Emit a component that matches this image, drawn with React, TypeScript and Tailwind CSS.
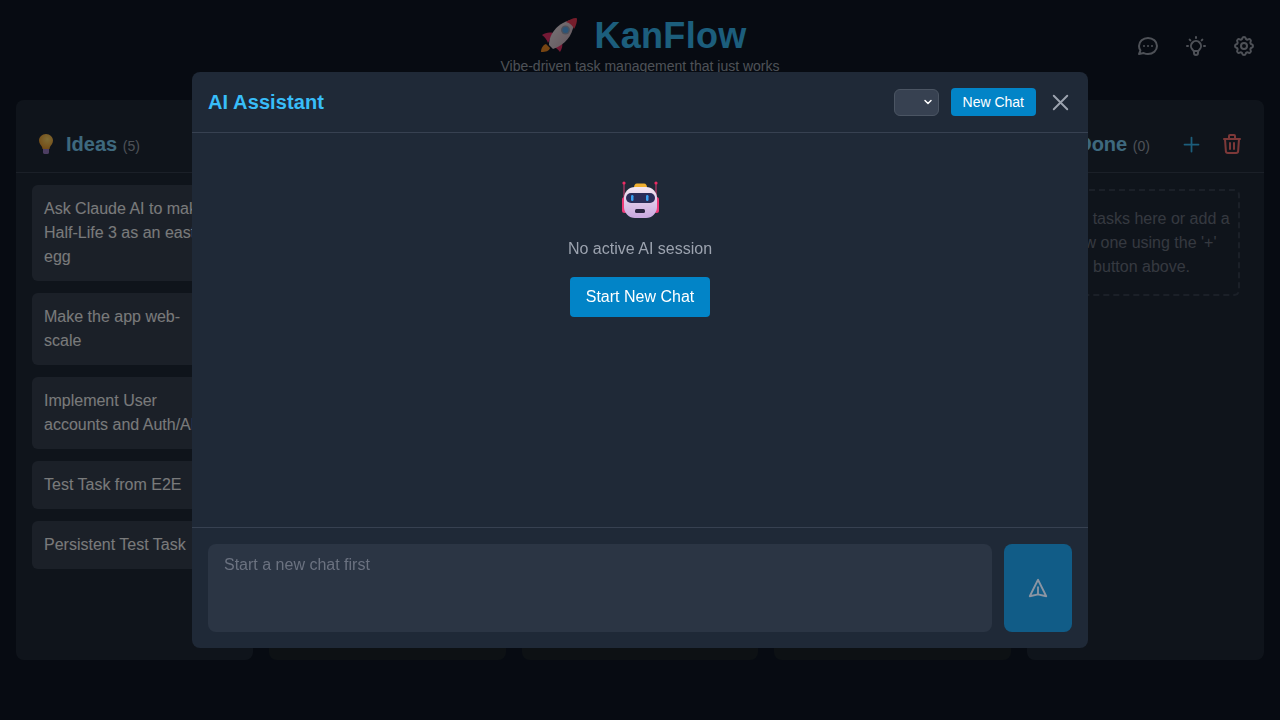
import { HiOutlineChat, HiOutlineCog, HiOutlineLightBulb, HiOutlineTrash, HiOutlinePlus, HiOutlineX, HiOutlinePaperAirplane } from "react-icons/hi";
import { ChevronDown } from "lucide-react";

const Rocket = () => (
  <svg viewBox="0 0 40 40" className="w-10 h-10">
    <defs>
      <linearGradient id="rb" x1="0" y1="0" x2="1" y2="1">
        <stop offset="0" stopColor="#f2eef0" />
        <stop offset="1" stopColor="#c4a8b8" />
      </linearGradient>
    </defs>
    <path d="M2 36c0-4 2-7 5-8l4 4c-1 3-4 4-9 4z" fill="#f08a24" />
    <path d="M3 19c3-2 7-3 11-2l-5 10c-1-3-3-6-6-8z" fill="#e8336a" />
    <path d="M21 36c2-3 3-7 2-11l-10 5c3 1 6 3 8 6z" fill="#e8336a" />
    <path d="M10 29c0-9 6-21 22-25l3 4c-2 12-9 21-21 25z" fill="url(#rb)" />
    <path d="M27 6c3-2 7-4 10-4 1 0 1 1 1 1 0 3-1 7-3 10-1-3-4-6-8-7z" fill="#ec3a56" />
    <circle cx="26.500" cy="14" r="4.500" fill="#9aa3b8" />
    <circle cx="26.500" cy="14" r="3" fill="#58a8ee" />
  </svg>
);

const Bulb = () => (
  <svg viewBox="0 0 20 24" className="w-5 h-6">
    <defs>
      <radialGradient id="bb" cx="0.6" cy="0.35" r="0.7">
        <stop offset="0" stopColor="#ffd86a" />
        <stop offset="1" stopColor="#e8962a" />
      </radialGradient>
    </defs>
    <path d="M10 2c4 0 7 3 7 6.500 0 3-2 4.500-3 6.500-.3.7-.5 1.500-.5 2h-7c0-.5-.2-1.300-.5-2-1-2-3-3.500-3-6.500C3 5 6 2 10 2z" fill="url(#bb)" />
    <path d="M7 17h6v3.500c0 1-1 1.500-3 1.500s-3-.5-3-1.500z" fill="#9a7cc4" />
  </svg>
);

const Robot = () => (
  <svg viewBox="0 0 40 40" className="w-10 h-10">
    <defs>
      <linearGradient id="hd" x1="0" y1="0" x2="0" y2="1">
        <stop offset="0" stopColor="#f4e6f0" />
        <stop offset="1" stopColor="#c9a8e0" />
      </linearGradient>
    </defs>
    <path d="M4 3l0 15M36 3l0 15" stroke="#d83a70" strokeWidth="1" />
    <circle cx="4" cy="3" r="1.600" fill="#ee2a62" />
    <circle cx="36" cy="3" r="1.600" fill="#ee2a62" />
    <rect x="2" y="17" width="5" height="16" rx="2.500" fill="#ee3a78" />
    <rect x="34" y="17" width="5" height="16" rx="2.500" fill="#ee3a78" />
    <path d="M14 8c0-3 1-4.500 3-4.500h7c2 0 3 1.500 3 4.500z" fill="#f0b030" />
    <rect x="4" y="7" width="33" height="31" rx="11" fill="url(#hd)" />
    <rect x="6" y="13" width="29" height="10" rx="5" fill="#2b2d58" />
    <rect x="11" y="15" width="2.500" height="6" rx="1.200" fill="#3aa0f0" />
    <rect x="26" y="15" width="2.500" height="6" rx="1.200" fill="#3aa0f0" />
    <rect x="15" y="29" width="10" height="4" rx="1.500" fill="#2a2440" />
  </svg>
);

const ideas = [
  "Ask Claude AI to make Half-Life 3 as an easter egg",
  "Make the app web-scale",
  "Implement User accounts and Auth/API",
  "Test Task from E2E",
  "Persistent Test Task",
];

function Column({ name, count, icon, cards, empty, add, dim }: { name: string; count: number; icon?: React.ReactNode; cards?: string[]; empty?: boolean; add?: boolean; dim?: boolean }) {
  return (
    <section className={dim ? "flex-1 min-w-0 flex flex-col bg-[#1a2329] rounded-lg" : "flex-1 min-w-0 flex flex-col bg-[#1f2937] rounded-lg"}>
      <header className="h-[73px] shrink-0 flex items-center justify-between pl-5 pr-5 pt-4 border-b border-[#374151]">
        <div className="flex items-center gap-2.5">
          <span className="w-5 flex justify-center">{icon}</span>
          <h2 className="text-xl font-bold text-[#7dd3fc] whitespace-nowrap">
            {name} <span className="text-sm font-normal text-[#9ca3af]">({count})</span>
          </h2>
        </div>
        <div className="flex items-center gap-4">
          {add && (
            <span className="w-6 h-6 flex items-center justify-center">
              <HiOutlinePlus className="w-[21px] h-[21px] text-[#38bdf8]" />
            </span>
          )}
          <HiOutlineTrash className="w-6 h-6 text-[#f87171]" />
        </div>
      </header>
      <div className="flex flex-col gap-3 pt-3 pl-4 pr-6">
        {cards?.map((c) => (
          <div key={c} className="rounded-md bg-[#374151] p-3 text-base leading-6 text-[#f3f4f6]">{c}</div>
        ))}
        {empty && (
          <div className="mt-1 rounded-md border-2 border-dashed border-[#374151] px-2 pt-4 pb-[15px] text-center text-base leading-6 text-[#6b7280]">
            Drop tasks here or add a new one using the '+' button above.
          </div>
        )}
      </div>
    </section>
  );
}

export default function App() {
  return (
    <div className="relative h-[720px] w-[1280px] overflow-hidden bg-[#0f1724] font-['Liberation_Sans',Arial,sans-serif]">
      <header className="relative h-[100px] flex flex-col items-center pt-4">
        <div className="flex items-center gap-[15px] h-10 pl-[6px]">
          <Rocket />
          <h1 className="text-4xl font-bold text-[#38bdf8] tracking-[0.3px]">KanFlow</h1>
        </div>
        <p className="text-sm text-[#9ca3af]">Vibe-driven task management that just works</p>
        <div className="absolute right-6 top-[34px] flex items-center gap-6 text-[#9ca3af]">
          <HiOutlineChat className="w-6 h-6" />
          <HiOutlineLightBulb className="w-6 h-6" />
          <HiOutlineCog className="w-6 h-6" />
        </div>
      </header>
      <main className="flex gap-4 px-4 h-[560px]">
        <Column name="Ideas" count={5} icon={<Bulb />} cards={ideas} />
        <Column name="To Do" count={0} empty dim add />
        <Column name="In Progress" count={0} empty dim add />
        <Column name="Review" count={0} empty dim add />
        <Column name="Done" count={0} empty add />
      </main>

      <div className="fixed inset-0 z-50 bg-black/50 flex items-center justify-center">
        <div className="w-[896px] h-[576px] flex flex-col bg-[#1f2937] rounded-lg">
          <div className="h-[61px] shrink-0 flex items-center justify-between px-4 border-b border-[#374151]">
            <h2 className="text-xl font-bold text-[#38bdf8] tracking-[0.1px]">AI Assistant</h2>
            <div className="flex items-center gap-3">
              <div className="w-[45px] h-[27px] flex items-center justify-end pr-[4px] rounded-md bg-[#374151] border border-[#4b5563] text-white">
                <ChevronDown className="w-3 h-3" strokeWidth={3} />
              </div>
              <button className="h-7 px-3 rounded bg-[#0284c7] text-sm text-white">New Chat</button>
              <span className="w-6 h-6 flex items-center justify-center">
                <HiOutlineX className="w-[27px] h-[27px] shrink-0 text-[#9ca3af]" strokeWidth={1.7} />
              </span>
            </div>
          </div>
          <div className="flex-1 flex flex-col items-center pt-[47px]">
            <Robot />
            <p className="mt-[17px] text-base leading-6 text-[#9ca3af]">No active AI session</p>
            <button className="mt-4 h-10 px-4 rounded bg-[#0284c7] text-base text-white">Start New Chat</button>
          </div>
          <div className="h-[121px] shrink-0 flex gap-3 p-4 border-t border-[#374151]">
            <div className="flex-1 rounded-lg bg-[#2b3544] px-4 pt-[9px] text-base leading-6 text-[#6b7280]">Start a new chat first</div>
            <div className="w-[68px] rounded-lg bg-[#115c87] flex items-center justify-center">
              <HiOutlinePaperAirplane className="w-[22px] h-[22px] text-[#8b95a3]" />
            </div>
          </div>
        </div>
      </div>
    </div>
  );
}
